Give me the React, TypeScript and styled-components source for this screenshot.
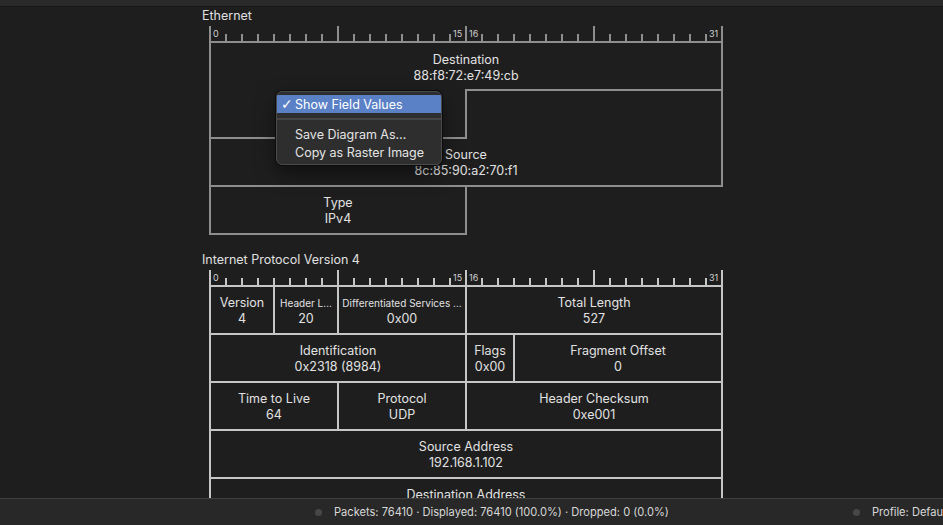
import styled, { createGlobalStyle } from "styled-components";

const GlobalStyle = createGlobalStyle`
  html, body {
    margin: 0;
    padding: 0;
    background: #1e1e1e;
    font-family: Inter, "Noto Sans", "DejaVu Sans", sans-serif;
    color: #e2e2e2;
  }
  * {
    box-sizing: border-box;
  }
`;

const Page = styled.div`
  position: relative;
  height: 100vh;
  display: flex;
  flex-direction: column;
  overflow: hidden;
`;

const TopBar = styled.div`
  height: 7px;
  flex: none;
  background: #2a2a2a;
  border-bottom: 1px solid #171717;
`;

const Main = styled.div`
  flex: 1;
  overflow: hidden;
  padding-left: 202px;
`;

const Section = styled.section`
  margin-bottom: 17px;
`;

const Title = styled.div`
  font-size: 12.5px;
  line-height: 16px;
  height: 16px;
  padding-top: 1px;
  color: #e0e0e0;
`;

const DiagramWrap = styled.div`
  padding-left: 8px;
`;

const RulerRow = styled.div`
  display: flex;
  margin-top: 3px;
  margin-left: -1px;
  height: 16px;
`;

const BitMark = styled.div<{ $major: boolean; $color: string; $last?: boolean }>`
  flex: none;
  width: ${(p) => (p.$last ? "2px" : "16px")};
  height: 16px;
  padding: 3px 0 0 4px;
  background: linear-gradient(${(p) => p.$color}, ${(p) => p.$color}) no-repeat left bottom /
    2px ${(p) => (p.$major ? "16px" : "8px")};
  font-size: 9px;
  line-height: 10px;
  color: #d0d0d0;
  white-space: nowrap;
`;

const FieldGrid = styled.div`
  display: grid;
  grid-template-columns: repeat(32, 16px);
  grid-auto-rows: 48px;
`;

const Cell = styled.div<{ $sides: string; $color: string }>`
  margin: -1px;
  border-style: solid;
  border-color: ${(p) => p.$color};
  border-top-width: ${(p) => (p.$sides.includes("t") ? "2px" : "0")};
  border-right-width: ${(p) => (p.$sides.includes("r") ? "2px" : "0")};
  border-bottom-width: ${(p) => (p.$sides.includes("b") ? "2px" : "0")};
  border-left-width: ${(p) => (p.$sides.includes("l") ? "2px" : "0")};
  display: flex;
  flex-direction: column;
  align-items: center;
  justify-content: center;
  padding-top: ${(p) => (p.$sides.includes("t") ? "2px" : "4px")};
  overflow: hidden;
  white-space: nowrap;
`;

const FieldName = styled.div<{ $small?: boolean }>`
  font-size: ${(p) => (p.$small ? "10px" : "12.5px")};
  line-height: 16px;
  color: #e2e2e2;
`;

const FieldValue = styled.div`
  font-size: 12.5px;
  line-height: 16px;
  color: #e2e2e2;
`;

const StatusBar = styled.div`
  height: 27px;
  flex: none;
  background: #282828;
  border-top: 1px solid #3f3f3f;
  display: flex;
  align-items: center;
  padding-left: 315px;
  white-space: nowrap;
  overflow: hidden;
`;

const StatusItem = styled.div<{ $offset?: number }>`
  display: flex;
  align-items: center;
  gap: 12px;
  margin-left: ${(p) => p.$offset ?? 0}px;
  font-size: 11.1px;
  color: #d8d8d8;
  flex: none;
`;

const StatusDot = styled.span`
  width: 7px;
  height: 7px;
  border-radius: 50%;
  background: #474747;
`;

const Menu = styled.div`
  position: absolute;
  left: 276px;
  top: 91px;
  width: 166px;
  padding: 3px 0;
  background: #2e2e2e;
  border: 1px solid #4a4a4a;
  border-radius: 6px;
  box-shadow: 0 0 0 1px #0c0c0c, 0 8px 20px rgba(0, 0, 0, 0.5);
  overflow: hidden;
`;

const MenuItem = styled.div<{ $active?: boolean }>`
  display: flex;
  align-items: center;
  height: 18px;
  padding-left: 4px;
  font-size: 12.5px;
  color: ${(p) => (p.$active ? "#ffffff" : "#e4e4e4")};
  background: ${(p) => (p.$active ? "#5a80c6" : "transparent")};
`;

const CheckSlot = styled.span`
  width: 14px;
  flex: none;
  font-size: 14px;
  font-family: "DejaVu Sans", sans-serif;
`;

const MenuSeparator = styled.div`
  height: 2px;
  margin: 5px 0;
  background: #454545;
`;

type Field = {
  name?: string;
  value?: string;
  col: number;
  span: number;
  row: number;
  sides: string;
  small?: boolean;
};

const ethernetFields: Field[] = [
  { name: "Destination", value: "88:f8:72:e7:49:cb", col: 1, span: 32, row: 1, sides: "tlr" },
  { col: 1, span: 16, row: 2, sides: "lbr" },
  { col: 17, span: 16, row: 2, sides: "tlr" },
  { name: "Source", value: "8c:85:90:a2:70:f1", col: 1, span: 32, row: 3, sides: "lrb" },
  { name: "Type", value: "IPv4", col: 1, span: 16, row: 4, sides: "lrb" },
];

const ipv4Fields: Field[] = [
  { name: "Version", value: "4", col: 1, span: 4, row: 1, sides: "tlrb" },
  { name: "Header L…", value: "20", col: 5, span: 4, row: 1, sides: "tlrb", small: true },
  { name: "Differentiated Services …", value: "0x00", col: 9, span: 8, row: 1, sides: "tlrb", small: true },
  { name: "Total Length", value: "527", col: 17, span: 16, row: 1, sides: "tlrb" },
  { name: "Identification", value: "0x2318 (8984)", col: 1, span: 16, row: 2, sides: "tlrb" },
  { name: "Flags", value: "0x00", col: 17, span: 3, row: 2, sides: "tlrb" },
  { name: "Fragment Offset", value: "0", col: 20, span: 13, row: 2, sides: "tlrb" },
  { name: "Time to Live", value: "64", col: 1, span: 8, row: 3, sides: "tlrb" },
  { name: "Protocol", value: "UDP", col: 9, span: 8, row: 3, sides: "tlrb" },
  { name: "Header Checksum", value: "0xe001", col: 17, span: 16, row: 3, sides: "tlrb" },
  { name: "Source Address", value: "192.168.1.102", col: 1, span: 32, row: 4, sides: "tlrb" },
  { name: "Destination Address", value: "239.255.255.250", col: 1, span: 32, row: 5, sides: "tlrb" },
];

const rulerLabels: Record<number, string> = { 0: "0", 15: "15", 16: "16", 31: "31" };

const Ruler = ({ color }: { color: string }) => (
  <RulerRow>
    {Array.from({ length: 32 }, (_, i) => (
      <BitMark key={i} $major={i % 8 === 0} $color={color}>
        {rulerLabels[i]}
      </BitMark>
    ))}
    <BitMark $major $color={color} $last />
  </RulerRow>
);

const Diagram = ({ title, fields, color }: { title: string; fields: Field[]; color: string }) => (
  <Section>
    <Title>{title}</Title>
    <DiagramWrap>
      <Ruler color={color} />
      <FieldGrid>
        {fields.map((f, i) => (
          <Cell
            key={i}
            $sides={f.sides}
            $color={color}
            style={{ gridColumn: `${f.col} / span ${f.span}`, gridRow: f.row }}
          >
            {f.name && <FieldName $small={f.small}>{f.name}</FieldName>}
            {f.value && <FieldValue>{f.value}</FieldValue>}
          </Cell>
        ))}
      </FieldGrid>
    </DiagramWrap>
  </Section>
);

const App = () => {
  return (
    <>
      <GlobalStyle />
      <Page>
        <TopBar />
        <Main>
          <Diagram title="Ethernet" fields={ethernetFields} color="#8e8e8e" />
          <Diagram title="Internet Protocol Version 4" fields={ipv4Fields} color="#c6c6c6" />
        </Main>
        <StatusBar>
          <StatusItem>
            <StatusDot />
            Packets: 76410 · Displayed: 76410 (100.0%) · Dropped: 0 (0.0%)
          </StatusItem>
          <StatusItem $offset={184}>
            <StatusDot />
            Profile: Default
          </StatusItem>
        </StatusBar>
        <Menu>
          <MenuItem $active>
            <CheckSlot>✓</CheckSlot>
            Show Field Values
          </MenuItem>
          <MenuSeparator />
          <MenuItem>
            <CheckSlot />
            Save Diagram As…
          </MenuItem>
          <MenuItem>
            <CheckSlot />
            Copy as Raster Image
          </MenuItem>
        </Menu>
      </Page>
    </>
  );
};

export default App;
